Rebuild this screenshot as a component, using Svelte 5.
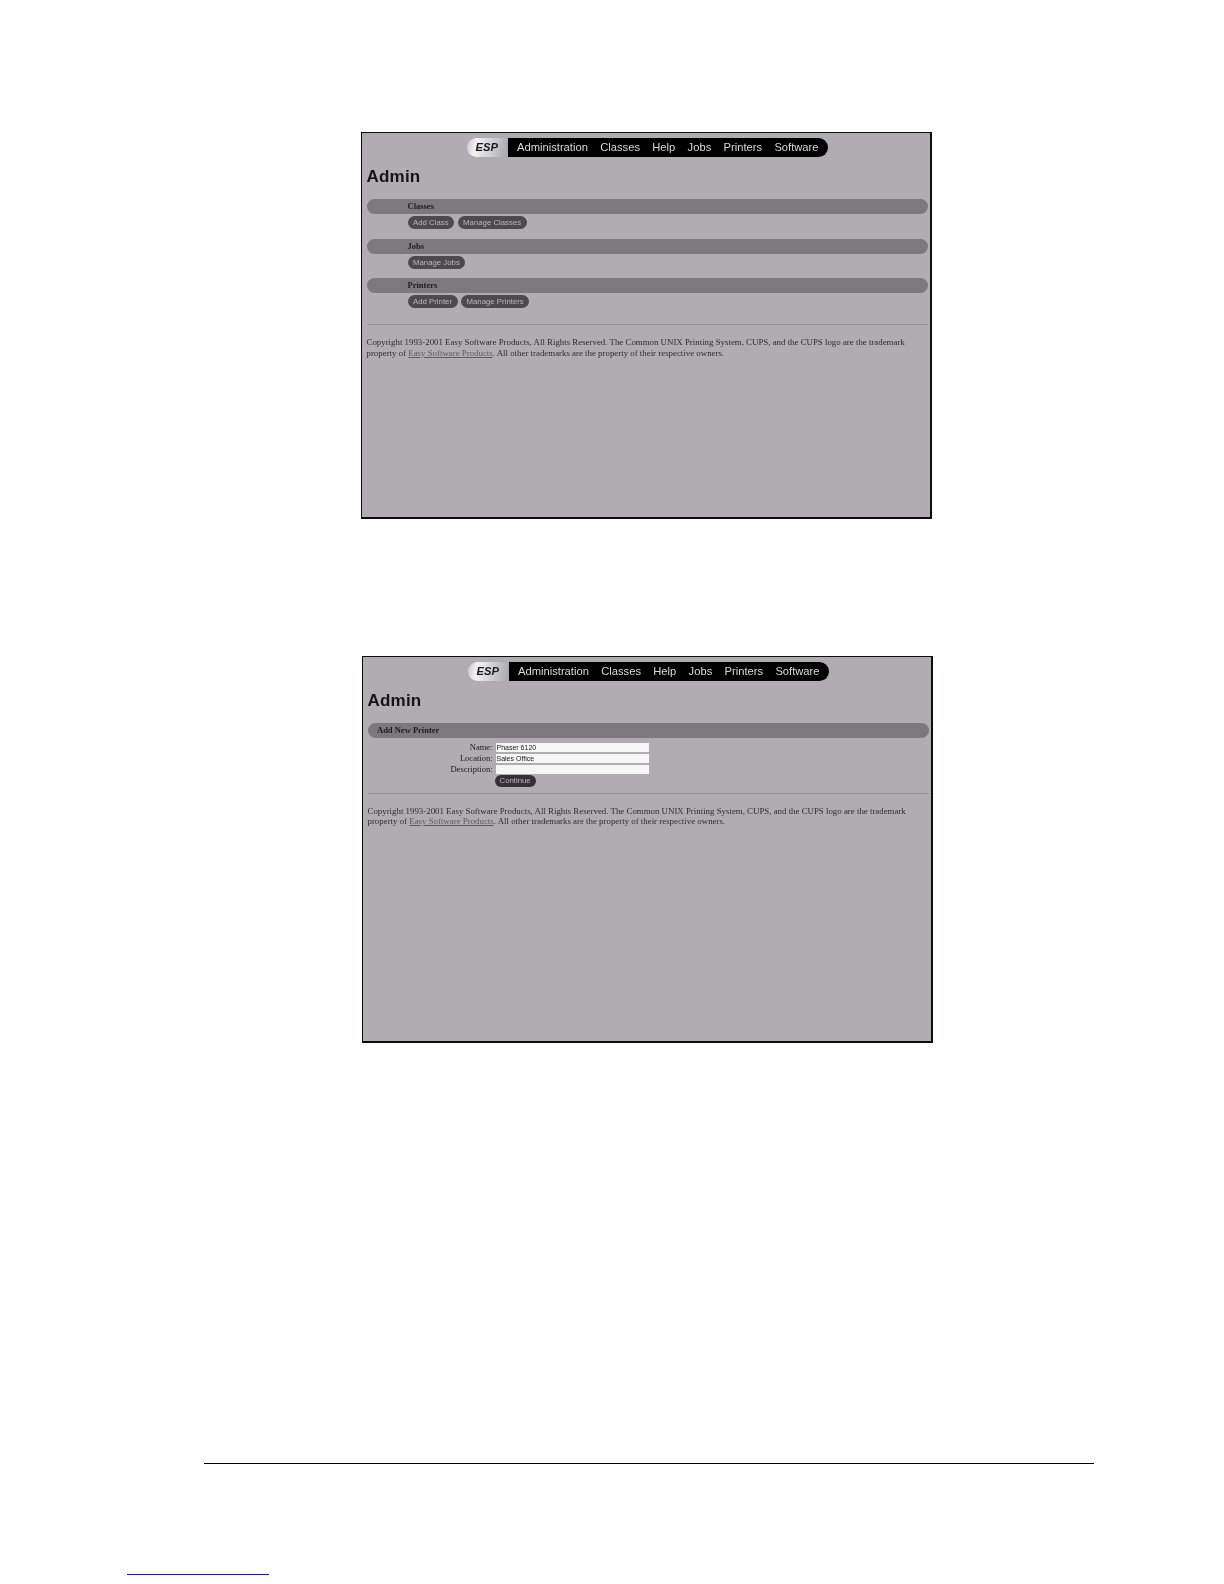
<script lang="ts">
	const nav = ['Administration', 'Classes', 'Help', 'Jobs', 'Printers', 'Software'];

	const sections = [
		{ title: 'Classes', buttons: ['Add Class', 'Manage Classes'] },
		{ title: 'Jobs', buttons: ['Manage Jobs'] },
		{ title: 'Printers', buttons: ['Add Printer', 'Manage Printers'] }
	];

	const fields = [
		{ label: 'Name:', value: 'Phaser 6120' },
		{ label: 'Location:', value: 'Sales Office' },
		{ label: 'Description:', value: '' }
	];
</script>

{#snippet header()}
	<nav class="nav">
		<span class="logo">ESP</span>
		<div class="links">
			{#each nav as item}
				<span>{item}</span>
			{/each}
		</div>
	</nav>
	<h1>Admin</h1>
{/snippet}

{#snippet footer()}
	<hr />
	<p class="legal">
		Copyright 1993-2001 Easy Software Products, All Rights Reserved. The Common UNIX Printing System, CUPS, and the CUPS logo are the trademark<br />
		property of <u>Easy Software Products</u>. All other trademarks are the property of their respective owners.
	</p>
{/snippet}

<main class="page">
	<section class="shot first">
		{@render header()}
		<div class="groups">
			{#each sections as s}
				<div class="group">
					<div class="bar indented">{s.title}</div>
					<div class="buttons">
						{#each s.buttons as b}
							<span class="btn">{b}</span>
						{/each}
					</div>
				</div>
			{/each}
		</div>
		{@render footer()}
	</section>

	<section class="shot second">
		{@render header()}
		<div class="bar">Add New Printer</div>
		<div class="form">
			{#each fields as f}
				<label>{f.label}</label>
				<div class="input">{f.value}</div>
			{/each}
			<span></span>
			<div class="submit"><span class="btn dark">Continue</span></div>
		</div>
		{@render footer()}
	</section>

	<footer class="page-foot">
		<div class="rule"></div>
		<div class="link-line"></div>
	</footer>
</main>

<style>
	:global(body) {
		margin: 0;
		background: #fff;
	}

	.page {
		box-sizing: border-box;
		width: 1224px;
		height: 1584px;
		padding-top: 132px;
		display: flex;
		flex-direction: column;
		overflow: hidden;
	}

	.shot {
		box-sizing: border-box;
		width: 571px;
		height: 387px;
		padding: 4.5px 2px 0 3.5px;
		background: #afadb0;
		border-style: solid;
		border-color: #0c0c0c;
		border-width: 1px 2px 2px 1px;
		display: flex;
		flex-direction: column;
	}
	.shot > :global(*) {
		filter: blur(0.5px);
	}
	.first {
		margin-left: 361px;
	}
	.second {
		margin-left: 362px;
		margin-top: 137px;
	}

	.nav {
		display: flex;
		height: 19px;
		margin-left: 101px;
		font-family: 'Liberation Sans', Arial, sans-serif;
		font-size: 11.2px;
		line-height: 19px;
	}
	.logo {
		width: 41px;
		padding-left: 9px;
		box-sizing: border-box;
		border-radius: 10px 0 0 10px;
		background: linear-gradient(100deg, #c8c7c9 0%, #f2f2f2 22%, #d4d3d5 55%, #a5a4a6 100%);
		font-weight: bold;
		font-style: italic;
		color: #1c1c1c;
	}
	.links {
		display: flex;
		gap: 12.3px;
		width: 320px;
		box-sizing: border-box;
		padding-left: 9.5px;
		background: #000;
		color: #d8d8d8;
		border-radius: 0 10px 10px 0;
	}

	h1 {
		margin: 9.5px 0 0 1px;
		height: 22px;
		font-family: 'Liberation Sans', Arial, sans-serif;
		font-size: 17px;
		line-height: 22px;
		font-weight: bold;
		letter-spacing: 0.2px;
		color: #141414;
	}

	.groups {
		display: flex;
		flex-direction: column;
		gap: 9.7px;
		margin-top: 11px;
	}
	.group {
		display: flex;
		flex-direction: column;
		gap: 2px;
	}

	.bar {
		box-sizing: border-box;
		margin-left: 1px;
		height: 15px;
		padding-left: 9.5px;
		border-radius: 8px;
		background: #7b797c;
		font-family: 'Liberation Serif', 'Times New Roman', serif;
		font-size: 8.5px;
		font-weight: bold;
		line-height: 15px;
		color: #1e1e1e;
	}
	.bar.indented {
		padding-left: 41px;
	}
	.second .bar {
		margin-top: 11px;
	}

	.buttons {
		display: flex;
		gap: 3.5px;
		margin-left: 42px;
	}
	.btn {
		display: inline-block;
		height: 13px;
		padding: 0 5.5px;
		border-radius: 7px;
		background: #4c4a4d;
		font-family: 'Liberation Sans', Arial, sans-serif;
		font-size: 7.8px;
		line-height: 13px;
		color: #b8b7b9;
	}
	.btn.dark {
		height: 12px;
		padding: 0 5px;
		line-height: 12px;
		background: #333133;
	}

	.form {
		display: grid;
		grid-template-columns: 126px 153px;
		column-gap: 3px;
		row-gap: 2px;
		margin-top: 4.5px;
		font-family: 'Liberation Serif', 'Times New Roman', serif;
		font-size: 8.5px;
		line-height: 9px;
		color: #1c1c1c;
	}
	.form label {
		text-align: right;
	}
	.input {
		box-sizing: border-box;
		height: 9px;
		padding-left: 1px;
		background: #f6f6f6;
		font-family: 'Liberation Sans', Arial, sans-serif;
		font-size: 7px;
		color: #222;
	}
	.submit {
		display: flex;
		margin: -1px 0 0 -1px;
	}

	hr {
		margin: 16px 0 0 1px;
		height: 1px;
		border: 0;
		background: #959396;
	}
	.second hr {
		margin-top: 6px;
	}
	.legal {
		margin: 11.5px 0 0 1px;
		white-space: nowrap;
		font-family: 'Liberation Serif', 'Times New Roman', serif;
		font-size: 8.85px;
		line-height: 10.8px;
		color: #2e2d2f;
	}
	.second .legal {
		margin-top: 12px;
	}
	.legal u {
		color: #5e5c5f;
	}

	.page-foot {
		margin-top: 420px;
	}
	.rule {
		margin-left: 204px;
		width: 890px;
		height: 1px;
		background: #000;
	}
	.link-line {
		margin: 110px 0 0 127px;
		width: 142px;
		height: 1px;
		background: #1a1a8c;
	}
</style>
